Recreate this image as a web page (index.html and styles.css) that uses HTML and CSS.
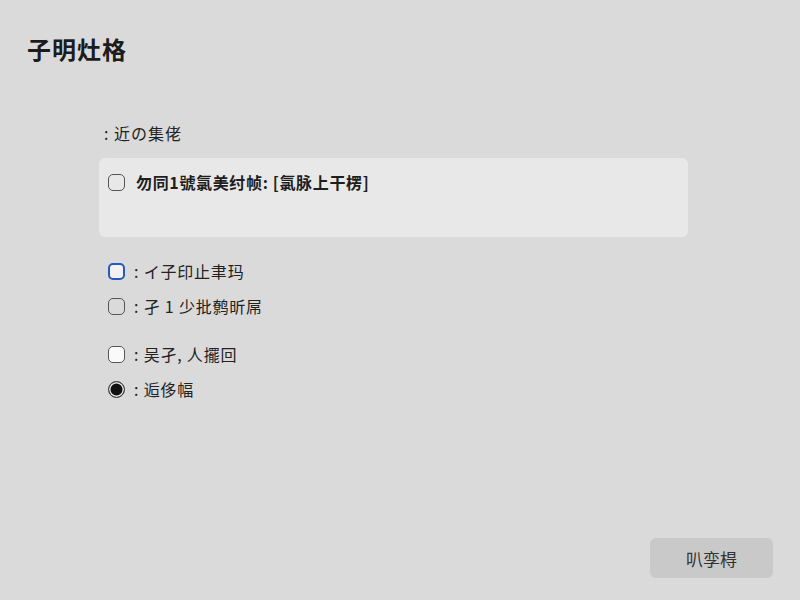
FILE: index.html
```html
<!DOCTYPE html>
<html lang="zh">
<head>
<meta charset="utf-8">
<link rel="stylesheet" href="styles.css">
</head>
<body>
<div class="page">
  <h1 class="title">子明灶格</h1>
  <div class="content">
    <div class="label">: 近の集佬</div>
    <div class="card">
      <div class="card-row">
        <span class="box box-plain"></span>
        <span class="card-text">勿同1號氯美纣帧: [氯脉上干楞]</span>
      </div>
    </div>
    <div class="group">
      <div class="opt"><span class="box box-focus"></span><span class="opt-text">: イ子印止聿玛</span></div>
      <div class="opt"><span class="box box-plain"></span><span class="opt-text">: 孑 1 少批鹩昕屌</span></div>
    </div>
    <div class="group">
      <div class="opt"><span class="box box-white"></span><span class="opt-text">: 吴孑, 人擺回</span></div>
      <div class="opt"><span class="radio"></span><span class="opt-text">: 逅侈幅</span></div>
    </div>
  </div>
  <div class="footer">
    <button class="btn">叭孪棏</button>
  </div>
</div>
</body>
</html>
```
FILE: styles.css
```css
html, body {
  margin: 0;
  padding: 0;
  background: #dadada;
  font-family: "Noto Sans CJK SC", "Noto Sans", sans-serif;
  color: #222;
}
.page {
  width: 800px;
  height: 600px;
  box-sizing: border-box;
  padding: 32px 27px 0 27px;
  display: flex;
  flex-direction: column;
  position: relative;
}
.title {
  margin: 0;
  font-size: 24px;
  font-weight: 700;
  letter-spacing: 1px;
  line-height: 34px;
  color: #1c1c1c;
}
.content {
  margin-left: 72px;
  margin-top: 55px;
  width: 589px;
  display: flex;
  flex-direction: column;
}
.label {
  font-size: 16px;
  line-height: 24px;
  letter-spacing: 1px;
  padding-left: 5px;
  color: #222;
}
.card {
  margin-top: 13px;
  height: 79px;
  background: #e8e8e8;
  border-radius: 6px;
  box-sizing: border-box;
  padding: 12px 9px;
}
.card-row {
  display: flex;
  align-items: center;
  gap: 11px;
}
.card-text {
  font-size: 16px;
  font-weight: 700;
  letter-spacing: 0.65px;
  line-height: 24px;
  color: #1e1e1e;
}
.group {
  display: flex;
  flex-direction: column;
  gap: 11px;
  margin-top: 22px;
  padding-left: 9px;
}
.group + .group {
  margin-top: 24px;
}
.opt {
  display: flex;
  align-items: center;
  gap: 9px;
  height: 24px;
}
.opt-text {
  font-size: 16px;
  line-height: 24px;
  letter-spacing: 0.8px;
  color: #222;
}
.box {
  width: 17px;
  height: 17px;
  box-sizing: border-box;
  border-radius: 5px;
  flex: none;
}
.box-plain {
  border: 1.5px solid #555;
}
.box-focus {
  border: 2px solid #2857c4;
  background: #f2f2f2;
}
.box-white {
  border: 1.5px solid #555;
  background: #fafafa;
}
.radio {
  width: 17px;
  height: 17px;
  box-sizing: border-box;
  border-radius: 50%;
  border: 1.5px solid #444;
  background: #111;
  box-shadow: inset 0 0 0 1.5px #e6e6e6;
  flex: none;
}
.footer {
  margin-top: auto;
  margin-bottom: 22px;
  display: flex;
  justify-content: flex-end;
}
.btn {
  width: 123px;
  height: 40px;
  border: none;
  border-radius: 6px;
  background: #c9c9c9;
  font-family: "Noto Sans CJK SC", "Noto Sans", sans-serif;
  font-size: 17px;
  color: #333;
}
```
